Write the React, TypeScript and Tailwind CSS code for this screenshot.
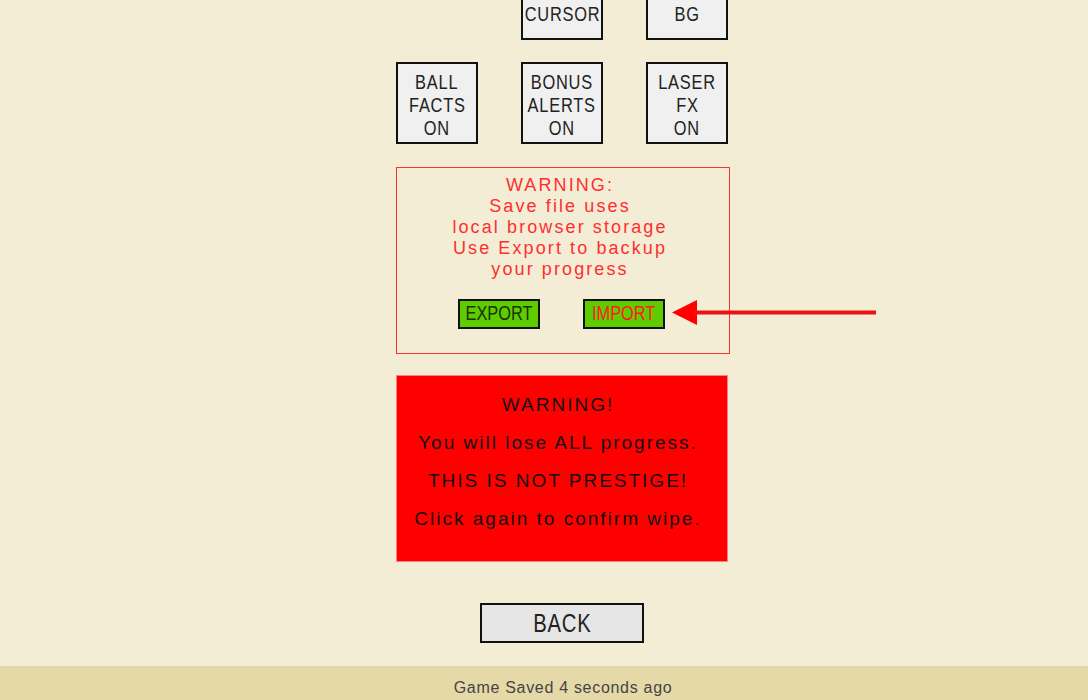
import React from "react";

const sans = { fontFamily: '"Liberation Sans", Arial, sans-serif' };

// narrow LCD-ish label: Liberation Sans squeezed horizontally
function Narrow({ children, className = "" }: { children: React.ReactNode; className?: string }) {
  return <span className={`block scale-x-[0.78] whitespace-nowrap ${className}`} style={sans}>{children}</span>;
}

function OptionButton({ lines, top = false }: { lines: string[]; top?: boolean }) {
  return (
    <button
      className={`w-[82px] h-[82px] bg-[#f0f0f0] border-2 border-[#111] flex flex-col items-center text-[21px] leading-[23px] text-[#222] tracking-[1px] ${
        top ? "justify-end pb-[13px]" : "justify-center pt-[3px]"
      }`}
    >
      {lines.map((l, i) => (
        <Narrow key={i}>{l}</Narrow>
      ))}
    </button>
  );
}

export default function App() {
  return (
    <div className="relative w-[1088px] h-[700px] overflow-hidden bg-[#f4edd6] flex flex-col">
      <div className="flex-1 flex flex-col items-center pl-[38px]">
        <div className="w-[334px] flex flex-col -mt-[42px]">
          {/* settings grid */}
          <div className="grid grid-cols-[82px_82px_82px] gap-x-[43px] gap-y-[22px]">
            <div />
            <OptionButton top lines={["CURSOR"]} />
            <OptionButton top lines={["BG"]} />
            <OptionButton lines={["BALL", "FACTS", "ON"]} />
            <OptionButton lines={["BONUS", "ALERTS", "ON"]} />
            <OptionButton lines={["LASER", "FX", "ON"]} />
          </div>

          {/* save warning */}
          <div className="mt-[23px] h-[187px] border border-[#ff3030] pt-[7px] flex flex-col items-center">
            <div
              className="text-center text-[18px] leading-[21px] tracking-[2.1px] text-[#ff2e2e] pr-[6px]"
              style={sans}
            >
              <div>WARNING:</div>
              <div>Save file uses</div>
              <div>local browser storage</div>
              <div>Use Export to backup</div>
              <div>your progress</div>
            </div>
            <div className="mt-[19px] flex gap-[43px] pr-[3px]">
              <button className="w-[82px] h-[30px] bg-[#5fcc00] border-2 border-[#111] text-[21px] leading-none text-[#1a3300] flex items-center justify-center pb-[3px]">
                <Narrow>EXPORT</Narrow>
              </button>
              <button className="w-[82px] h-[30px] bg-[#5fcc00] border-2 border-[#111] text-[21px] leading-none text-[#ff1a1a] flex items-center justify-center pb-[3px]">
                <Narrow>IMPORT</Narrow>
              </button>
            </div>
          </div>

          {/* wipe warning */}
          <div
            className="mt-[21px] w-[332px] h-[187px] bg-[#ff0000] border border-[#ff8080] pt-[10px] pr-[8px] text-center text-[19px] leading-[38px] tracking-[2px] text-[#111]"
            style={sans}
          >
            <div>WARNING!</div>
            <div>You will lose ALL progress.</div>
            <div>THIS IS NOT PRESTIGE!</div>
            <div>Click again to confirm wipe.</div>
          </div>

          <div className="mt-[41px] flex justify-center pr-[2px]">
            <button className="w-[164px] h-[40px] bg-[#e6e6e6] border-2 border-[#111] text-[26px] leading-none text-[#222] tracking-[1px] flex items-center justify-center">
              <Narrow>BACK</Narrow>
            </button>
          </div>
        </div>
      </div>

      <div
        className="h-[34px] bg-[#e6d9a8] flex items-center justify-center pl-[38px] pt-[10px] text-[16px] tracking-[0.7px] text-[#444]"
        style={sans}
      >
        Game Saved 4 seconds ago
      </div>

      {/* annotation arrow */}
      <svg
        className="absolute left-[672px] top-[300px]"
        width="206"
        height="25"
        viewBox="0 0 206 25"
      >
        <polygon points="0,12.5 25,0 25,25" fill="#ff0000" />
        <rect x="22" y="10.5" width="182" height="4" fill="#ee1111" />
      </svg>
    </div>
  );
}
